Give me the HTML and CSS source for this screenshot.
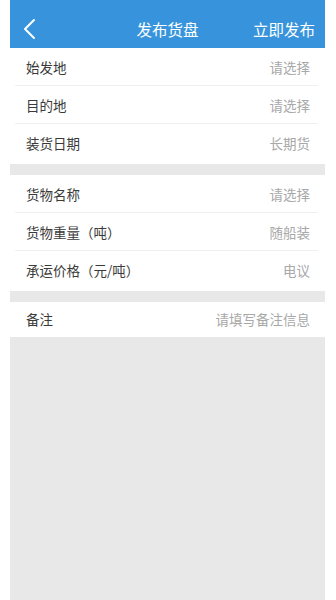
FILE: index.html
```html
<!DOCTYPE html>
<html lang="zh">
<head>
<meta charset="utf-8">
<title>发布货盘</title>
<link rel="stylesheet" href="styles.css">
</head>
<body>
<div class="page">
  <header class="topbar">
    <svg class="back" width="14" height="22" viewBox="0 0 14 22"><path d="M11 2 L2 11 L11 20" fill="none" stroke="#fff" stroke-width="2" stroke-linecap="round" stroke-linejoin="round"/></svg>
    <div class="title">发布货盘</div>
    <div class="action">立即发布</div>
  </header>
  <section class="group">
    <div class="row"><span class="label">始发地</span><span class="value">请选择</span></div>
    <div class="row"><span class="label">目的地</span><span class="value">请选择</span></div>
    <div class="row last"><span class="label">装货日期</span><span class="value">长期货</span></div>
  </section>
  <div class="gap"></div>
  <section class="group">
    <div class="row"><span class="label">货物名称</span><span class="value">请选择</span></div>
    <div class="row"><span class="label">货物重量（吨）</span><span class="value">随船装</span></div>
    <div class="row last"><span class="label">承运价格（元/吨）</span><span class="value">电议</span></div>
  </section>
  <div class="gap"></div>
  <section class="group">
    <div class="row note"><span class="label">备注</span><span class="value">请填写备注信息</span></div>
  </section>
  <div class="filler"></div>
</div>
</body>
</html>
```
FILE: styles.css
```css
html, body {
  margin: 0;
  padding: 0;
  background: #ffffff;
  height: 100%;
}
body {
  font-family: "Noto Sans CJK SC", "Noto Sans", sans-serif;
}
.page {
  margin: 0 11px 0 10px;
  height: 600px;
  display: flex;
  flex-direction: column;
}
.topbar {
  height: 48px;
  background: #3794dc;
  color: #fff;
  display: flex;
  align-items: center;
  padding: 9px 10px 0 13px;
  box-sizing: border-box;
  position: relative;
}
.back {
  display: block;
}
.title {
  position: absolute;
  left: 0;
  right: 0;
  top: 9px;
  bottom: 0;
  display: flex;
  align-items: center;
  justify-content: center;
  font-size: 15.5px;
  pointer-events: none;
}
.action {
  margin-left: auto;
  font-size: 15.5px;
}
.group {
  padding-bottom: 2px;
}
.row {
  height: 38px;
  margin: 0 7px 0 5px;
  padding: 0 8px 0 11px;
  border-bottom: 1px solid #f0f0f0;
  box-sizing: border-box;
  display: flex;
  align-items: center;
  justify-content: space-between;
  font-size: 13.5px;
}
.row.last {
  border-bottom: none;
}
.row.note {
  height: 33px;
  border-bottom: none;
}
.label {
  color: #3a3a3a;
}
.value {
  color: #a8a8a8;
}
.gap {
  height: 11px;
  background: #e8e8e8;
}
.filler {
  flex: 1;
  background: #e8e8e8;
}
```
